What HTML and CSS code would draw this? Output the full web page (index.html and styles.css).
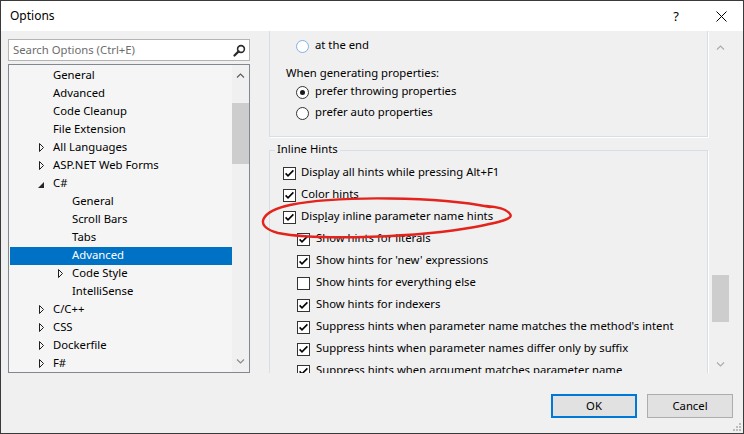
FILE: index.html
```html
<!DOCTYPE html>
<html lang="en">
<head>
<meta charset="utf-8">
<title>Options</title>
<link rel="stylesheet" href="styles.css">
</head>
<body>
<div class="window">
  <header class="titlebar">
    <span class="title">Options</span>
    <span class="tb-btn help">?</span>
    <span class="tb-btn close"><svg width="11" height="11" viewBox="0 0 11 11"><path d="M0.5 0.5 L10.5 10.5 M10.5 0.5 L0.5 10.5" stroke="#000" stroke-width="1" fill="none"/></svg></span>
  </header>
  <div class="main">
    <div class="left">
      <div class="search">
        <span class="placeholder">Search Options (Ctrl+E)</span>
        <svg class="mag" width="13" height="13" viewBox="0 0 13 13"><circle cx="8" cy="5" r="3.4" fill="none" stroke="#2b2b2b" stroke-width="1.6"/><path d="M5.6 7.4 L1.5 11.5" stroke="#2b2b2b" stroke-width="2.2" stroke-linecap="round"/></svg>
      </div>
      <div class="tree">
        <div class="rows">
          <div class="row l1"><span class="exp"></span><span class="t">General</span></div>
          <div class="row l1"><span class="exp"></span><span class="t">Advanced</span></div>
          <div class="row l1"><span class="exp"></span><span class="t">Code Cleanup</span></div>
          <div class="row l1"><span class="exp"></span><span class="t">File Extension</span></div>
          <div class="row l1"><span class="exp"><svg width="6" height="9" viewBox="0 0 6 9"><path d="M0.5 0.5 L4.5 4.5 L0.5 8.5 Z" fill="none" stroke="#1e1e1e"/></svg></span><span class="t">All Languages</span></div>
          <div class="row l1"><span class="exp"><svg width="6" height="9" viewBox="0 0 6 9"><path d="M0.5 0.5 L4.5 4.5 L0.5 8.5 Z" fill="none" stroke="#1e1e1e"/></svg></span><span class="t">ASP.NET Web Forms</span></div>
          <div class="row l1"><span class="exp open"><svg width="6" height="6" viewBox="0 0 6 6"><path d="M6 0 L6 6 L0 6 Z" fill="#262626"/></svg></span><span class="t">C#</span></div>
          <div class="row l2"><span class="exp"></span><span class="t">General</span></div>
          <div class="row l2"><span class="exp"></span><span class="t">Scroll Bars</span></div>
          <div class="row l2"><span class="exp"></span><span class="t">Tabs</span></div>
          <div class="row l2 selected"><span class="exp"></span><span class="t">Advanced</span></div>
          <div class="row l2"><span class="exp"><svg width="6" height="9" viewBox="0 0 6 9"><path d="M0.5 0.5 L4.5 4.5 L0.5 8.5 Z" fill="none" stroke="#1e1e1e"/></svg></span><span class="t">Code Style</span></div>
          <div class="row l2"><span class="exp"></span><span class="t">IntelliSense</span></div>
          <div class="row l1"><span class="exp"><svg width="6" height="9" viewBox="0 0 6 9"><path d="M0.5 0.5 L4.5 4.5 L0.5 8.5 Z" fill="none" stroke="#1e1e1e"/></svg></span><span class="t">C/C++</span></div>
          <div class="row l1"><span class="exp"><svg width="6" height="9" viewBox="0 0 6 9"><path d="M0.5 0.5 L4.5 4.5 L0.5 8.5 Z" fill="none" stroke="#1e1e1e"/></svg></span><span class="t">CSS</span></div>
          <div class="row l1"><span class="exp"><svg width="6" height="9" viewBox="0 0 6 9"><path d="M0.5 0.5 L4.5 4.5 L0.5 8.5 Z" fill="none" stroke="#1e1e1e"/></svg></span><span class="t">Dockerfile</span></div>
          <div class="row l1"><span class="exp"><svg width="6" height="9" viewBox="0 0 6 9"><path d="M0.5 0.5 L4.5 4.5 L0.5 8.5 Z" fill="none" stroke="#1e1e1e"/></svg></span><span class="t">F#</span></div>
        </div>
        <div class="vscroll tree-scroll">
          <div class="arrow"><svg width="9" height="5" viewBox="0 0 9 5"><path d="M1 4.5 L4.5 1 L8 4.5" fill="none" stroke="#5a5a5a" stroke-width="1.1"/></svg></div>
          <div class="track"><div class="thumb"></div></div>
          <div class="arrow"><svg width="9" height="5" viewBox="0 0 9 5"><path d="M1 0.5 L4.5 4 L8 0.5" fill="none" stroke="#8a8a8a" stroke-width="1.1"/></svg></div>
        </div>
      </div>
    </div>
    <div class="right">
      <div class="pane">
        <div class="group scrolled">
          <div class="opt radio-row"><span class="radio hot"></span><span class="t">at the end</span></div>
          <div class="opt label"><span class="t">When generating properties:</span></div>
          <div class="opt radio-row"><span class="radio on"><span class="dot"></span></span><span class="t">prefer throwing properties</span></div>
          <div class="opt radio-row spaced"><span class="radio"></span><span class="t">prefer auto properties</span></div>
        </div>
        <fieldset class="group hints">
          <legend>Inline Hints</legend>
          <div class="cbrow first"><span class="cb"><svg width="11" height="11" viewBox="0 0 11 11"><path d="M1.6 5.4 L4 7.8 L9.4 2.4" fill="none" stroke="#000" stroke-width="1.6"/></svg></span><span class="t">Display all hints while pressing Alt+F1</span></div>
          <div class="cbrow"><span class="cb"><svg width="11" height="11" viewBox="0 0 11 11"><path d="M1.6 5.4 L4 7.8 L9.4 2.4" fill="none" stroke="#000" stroke-width="1.6"/></svg></span><span class="t">Color hints</span></div>
          <div class="cbrow"><span class="cb"><svg width="11" height="11" viewBox="0 0 11 11"><path d="M1.6 5.4 L4 7.8 L9.4 2.4" fill="none" stroke="#000" stroke-width="1.6"/></svg></span><span class="t">Disp<u>l</u>ay inline parameter name hints</span></div>
          <div class="cbrow sub"><span class="cb"><svg width="11" height="11" viewBox="0 0 11 11"><path d="M1.6 5.4 L4 7.8 L9.4 2.4" fill="none" stroke="#000" stroke-width="1.6"/></svg></span><span class="t">Show hints for literals</span></div>
          <div class="cbrow sub"><span class="cb"><svg width="11" height="11" viewBox="0 0 11 11"><path d="M1.6 5.4 L4 7.8 L9.4 2.4" fill="none" stroke="#000" stroke-width="1.6"/></svg></span><span class="t">Show hints for 'new' expressions</span></div>
          <div class="cbrow sub"><span class="cb"></span><span class="t">Show hints for everything else</span></div>
          <div class="cbrow sub"><span class="cb"><svg width="11" height="11" viewBox="0 0 11 11"><path d="M1.6 5.4 L4 7.8 L9.4 2.4" fill="none" stroke="#000" stroke-width="1.6"/></svg></span><span class="t">Show hints for indexers</span></div>
          <div class="cbrow sub"><span class="cb"><svg width="11" height="11" viewBox="0 0 11 11"><path d="M1.6 5.4 L4 7.8 L9.4 2.4" fill="none" stroke="#000" stroke-width="1.6"/></svg></span><span class="t">Suppress hints when parameter name matches the method's intent</span></div>
          <div class="cbrow sub"><span class="cb"><svg width="11" height="11" viewBox="0 0 11 11"><path d="M1.6 5.4 L4 7.8 L9.4 2.4" fill="none" stroke="#000" stroke-width="1.6"/></svg></span><span class="t">Suppress hints when parameter names differ only by suffix</span></div>
          <div class="cbrow sub"><span class="cb"><svg width="11" height="11" viewBox="0 0 11 11"><path d="M1.6 5.4 L4 7.8 L9.4 2.4" fill="none" stroke="#000" stroke-width="1.6"/></svg></span><span class="t">Suppress hints when argument matches parameter name</span></div>
        </fieldset>
      </div>
      <div class="vscroll pane-scroll">
        <div class="arrow"><svg width="9" height="5" viewBox="0 0 9 5"><path d="M1 4.5 L4.5 1 L8 4.5" fill="none" stroke="#ababab" stroke-width="1.1"/></svg></div>
        <div class="track"><div class="thumb"></div></div>
        <div class="arrow"><svg width="9" height="5" viewBox="0 0 9 5"><path d="M1 0.5 L4.5 4 L8 0.5" fill="none" stroke="#ababab" stroke-width="1.1"/></svg></div>
      </div>
    </div>
  </div>
  <footer class="footer">
    <button class="btn default">OK</button>
    <button class="btn">Cancel</button>
  </footer>
  <svg class="annotation" width="744" height="434" viewBox="0 0 744 434"><path d="M490 207 C440 197, 340 195, 290 205 C262 211, 252 226, 278 233 C320 241, 420 237, 475 227 C500 222, 514 219, 510 214 C507 209, 499 207, 486 206" fill="none" stroke="#e3231c" stroke-width="2.4" stroke-linecap="round"/></svg>
  <svg class="grip" width="11" height="11" viewBox="0 0 11 11"><rect x="8" y="2" width="2" height="2" fill="#bcbcbc"/><rect x="5" y="5" width="2" height="2" fill="#bcbcbc"/><rect x="8" y="5" width="2" height="2" fill="#bcbcbc"/><rect x="2" y="8" width="2" height="2" fill="#bcbcbc"/><rect x="5" y="8" width="2" height="2" fill="#bcbcbc"/><rect x="8" y="8" width="2" height="2" fill="#bcbcbc"/></svg>
</div>
</body>
</html>
```

FILE: styles.css
```css
* { box-sizing: border-box; }
html, body { margin: 0; padding: 0; }
body {
  font-family: "Noto Sans", "Segoe UI", sans-serif;
  font-size: 11.3px;
  color: #000;
  background: #f0f0f0;
}
.window {
  position: relative;
  width: 744px;
  height: 434px;
  border: 1px solid #3a3a3a;
  background: #f0f0f0;
  display: flex;
  flex-direction: column;
  overflow: hidden;
}
.titlebar {
  flex: none;
  height: 30px;
  background: #fff;
  display: flex;
  align-items: center;
  padding-left: 9px;
}
.title { flex: 1; font-size: 12px; padding-bottom: 1px; }
.tb-btn {
  height: 30px;
  display: flex;
  align-items: center;
  justify-content: center;
}
.help { width: 46px; font-size: 13px; }
.close { width: 44px; }

.main { flex: none; height: 342px; display: flex; }
.left {
  flex: none;
  width: 249px;
  padding: 8px 0 0 7px;
  display: flex;
  flex-direction: column;
  gap: 3px;
}
.search {
  flex: none;
  width: 242px;
  height: 22px;
  border: 1px solid #b4b4b4;
  background: #fff;
  display: flex;
  align-items: center;
  padding: 0 3px 0 4px;
}
.placeholder { flex: 1; color: #6d6d6d; padding-bottom: 2px; }
.mag { flex: none; }

.tree {
  width: 242px;
  height: 309px;
  border: 1px solid #828790;
  background: #f5f5f5;
  display: flex;
}
.rows { flex: 1; padding: 2px 0 0 1px; overflow: hidden; min-width: 0; }
.row {
  height: 18px;
  display: flex;
  align-items: center;
  white-space: nowrap;
}
.row .t { padding-bottom: 4px; }
.row.l1 { padding-left: 29px; }
.row.l2 { padding-left: 48px; }
.row.selected { background: #0072c6; color: #fff; }
.exp { flex: none; width: 14px; display: flex; align-items: center; padding-bottom: 2px; }
.exp.open { padding-top: 1px; padding-bottom: 0; margin-left: -1px; width: 15px; }

.vscroll { flex: none; width: 17px; display: flex; flex-direction: column; }
.vscroll .arrow { flex: none; display: flex; align-items: center; justify-content: center; }
.vscroll .track { flex: 1; }
.vscroll .thumb { background: #cdcdcd; }
.tree-scroll { background: #f0f0f0; }
.tree-scroll .arrow { height: 21px; }
.tree-scroll .thumb { margin-top: 17px; height: 61px; }

.right { flex: 1; display: flex; padding-right: 14px; min-width: 0; }
.pane { flex: 1; overflow: hidden; padding: 0 4px 0 19px; min-width: 0; }
.pane-scroll { margin-top: 8px; height: 334px; }
.pane-scroll .arrow { height: 17px; }
.pane-scroll .thumb { margin-top: 219px; height: 47px; }

.group { border: 1px solid #d5dfe5; box-shadow: 1px 1px 0 #fff; }
.scrolled { border-top: none; padding: 6px 0 14px 16px; }
.opt { height: 18px; display: flex; align-items: center; white-space: nowrap; }
.opt .t { padding-bottom: 3px; }
.opt.label { margin-top: 10px; }
.radio-row { padding-left: 10px; gap: 6px; }
.radio-row.spaced { margin-top: 3px; }
.radio {
  flex: none;
  width: 13px;
  height: 13px;
  border-radius: 50%;
  border: 1px solid #333;
  background: #fff;
  display: flex;
  align-items: center;
  justify-content: center;
}
.radio.hot { border-color: #7fb2e8; }
.radio .dot { width: 5px; height: 5px; border-radius: 50%; background: #1a1a1a; }

.hints {
  margin: 5px 0 0;
  padding: 4px 0 0;
  min-width: 0;
}
.hints legend {
  margin-left: 5px;
  padding: 0 2px 4px;
  height: 17px;
  line-height: 13px;
}
.cbrow {
  height: 22px;
  display: flex;
  align-items: center;
  gap: 5px;
  padding-left: 13px;
  white-space: nowrap;
}
.cbrow.first { height: 21px; }
.cbrow .t { padding-bottom: 4px; }
.cbrow.sub { padding-left: 27px; gap: 6px; }
.cb {
  flex: none;
  width: 13px;
  height: 13px;
  border: 1px solid #333;
  background: #fff;
  display: flex;
}
.cb svg { display: block; }

.footer {
  flex: 1;
  display: flex;
  justify-content: flex-end;
  align-items: flex-start;
  gap: 10px;
  padding: 21px 10px 0 0;
}
.btn {
  width: 86px;
  height: 24px;
  background: #e1e1e1;
  border: 1px solid #adadad;
  font: inherit;
  color: #000;
  padding: 0 0 2px;
}
.btn.default { border: 2px solid #0078d7; }

.annotation { position: absolute; left: -1px; top: -1px; pointer-events: none; }
.grip { position: absolute; right: 1px; bottom: 1px; }
```
